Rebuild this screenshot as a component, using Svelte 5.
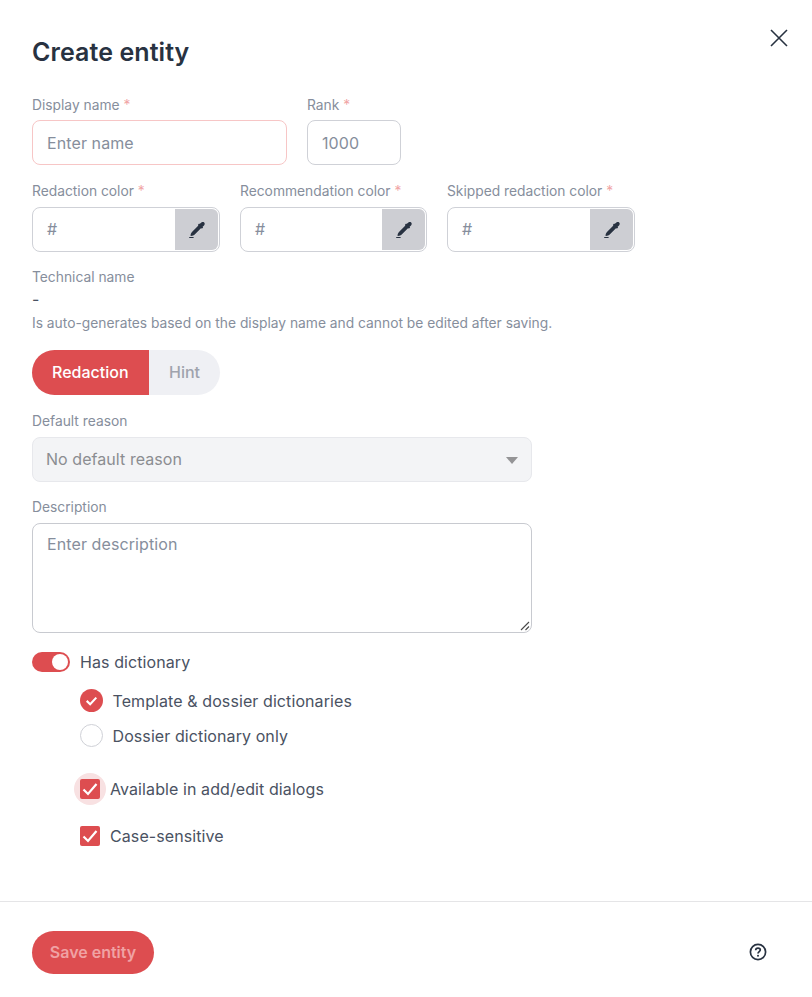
<script lang="ts">
	const colorFields = [
		{ label: 'Redaction color', width: 188 },
		{ label: 'Recommendation color', width: 187 },
		{ label: 'Skipped redaction color', width: 188 }
	];
</script>

<div class="dialog">
	<button class="close" aria-label="Close">
		<svg viewBox="0 0 18 18" width="18" height="18">
			<path d="M1 1 L17 17 M17 1 L1 17" />
		</svg>
	</button>

	<div class="body">
		<h1>Create entity</h1>

		<div class="row first">
			<div class="field">
				<span class="label">Display name <i>*</i></span>
				<div class="input name">Enter name</div>
			</div>
			<div class="field">
				<span class="label">Rank <i>*</i></span>
				<div class="input rank">1000</div>
			</div>
		</div>

		<div class="row colors">
			{#each colorFields as f}
				<div class="field">
					<span class="label">{f.label} <i>*</i></span>
					<div class="color" style="width: {f.width}px">
						<span class="hash">#</span>
						<span class="picker">
							<svg viewBox="0 0 18 18" width="18" height="18">
								<path class="dark" d="M12.2 2.6 C13 1.2 15 0.4 16.2 1.4 C17.4 2.6 16.4 4.4 15.2 5.2 L14.6 5.8 L15.1 6.4 L13.8 7.7 L13.2 7.1 L7 13.3 C5.8 14.5 4.2 15 2.6 14.9 C2.5 13.4 3 11.9 4.2 10.7 L10.4 4.5 L9.8 3.9 L11.1 2.6 L11.7 3.1 Z" />
								<path class="dark" d="M1.2 16 H5.6 V17 H1.2 Z" />
							</svg>
						</span>
					</div>
				</div>
			{/each}
		</div>

		<div class="technical">
			<span class="label">Technical name</span>
			<span class="dash">-</span>
			<span class="hint">Is auto-generates based on the display name and cannot be edited after saving.</span>
		</div>

		<div class="segmented">
			<span class="seg active">Redaction</span>
			<span class="seg">Hint</span>
		</div>

		<div class="field reason">
			<span class="label">Default reason</span>
			<div class="select">
				No default reason
				<span class="caret"></span>
			</div>
		</div>

		<div class="field description">
			<span class="label">Description</span>
			<div class="textarea">
				Enter description
				<svg class="grip" viewBox="0 0 10 10" width="10" height="10">
					<path d="M1 9 L9 1 M5.5 9 L9 5.5" />
				</svg>
			</div>
		</div>

		<div class="switch-row">
			<span class="switch"><span class="knob"></span></span>
			<span class="text">Has dictionary</span>
		</div>

		<div class="radios">
			<div class="radio-row">
				<span class="radio on">
					<svg viewBox="0 0 24 24" width="23" height="23"><path d="M7 12.4 L10.6 15.8 L17 9" /></svg>
				</span>
				<span class="text">Template &amp; dossier dictionaries</span>
			</div>
			<div class="radio-row">
				<span class="radio"></span>
				<span class="text">Dossier dictionary only</span>
			</div>
		</div>

		<div class="checks">
			<div class="check-row">
				<span class="check halo">
					<svg viewBox="0 0 20 20" width="20" height="20"><path d="M3.5 10.5 L8 15 L16.5 5" /></svg>
				</span>
				<span class="text">Available in add/edit dialogs</span>
			</div>
			<div class="check-row">
				<span class="check">
					<svg viewBox="0 0 20 20" width="20" height="20"><path d="M3.5 10.5 L8 15 L16.5 5" /></svg>
				</span>
				<span class="text">Case-sensitive</span>
			</div>
		</div>
	</div>

	<div class="footer">
		<span class="save"><span>Save entity</span></span>
		<svg class="help" viewBox="0 0 18 18" width="18" height="18">
			<circle cx="9" cy="9" r="7.6" />
			<path d="M6.7 7.2 C6.7 5.9 7.7 5.1 9 5.1 C10.3 5.1 11.3 5.9 11.3 7.1 C11.3 8.6 9 8.7 9 10.5" />
			<circle class="dot" cx="9" cy="12.8" r="1" />
		</svg>
	</div>
</div>

<style>
	:global(body) {
		background: #fff;
	}

	.dialog {
		position: relative;
		width: 812px;
		height: 997px;
		box-sizing: border-box;
		font-family: Inter, 'Noto Sans', sans-serif;
		color: #283241;
		background: #fff;
	}

	.close {
		position: absolute;
		top: 29px;
		right: 24px;
		width: 18px;
		height: 18px;
		padding: 0;
		border: 0;
		background: none;
	}

	.close svg {
		display: block;
	}

	.close path {
		fill: none;
		stroke: #283241;
		stroke-width: 1.6;
	}

	.body {
		padding: 37px 32px 0;
		height: 864px;
		box-sizing: border-box;
	}

	h1 {
		margin: 0;
		font-size: 25px;
		line-height: 30px;
		font-weight: 600;
		letter-spacing: 0.08px;
		color: #283241;
	}

	.row {
		display: flex;
		gap: 20px;
	}

	.first {
		margin-top: 29px;
	}

	.first .label {
		margin-bottom: 6px;
	}

	.colors {
		margin-top: 17px;
	}

	.field {
		display: flex;
		flex-direction: column;
	}

	.label {
		font-size: 13.8px;
		line-height: 18px;
		color: #868e9c;
		margin-bottom: 7px;
	}

	.label i {
		font-style: normal;
		color: #f1a5a5;
	}

	.input {
		height: 45px;
		box-sizing: border-box;
		border: 1px solid #cfd1d7;
		border-radius: 8px;
		padding: 0 14px;
		font-size: 16px;
		line-height: 44px;
		letter-spacing: 0.1px;
		color: #868e9c;
	}

	.name {
		width: 255px;
		border-color: #f7c6c6;
	}

	.rank {
		width: 94px;
	}

	.color {
		display: flex;
		justify-content: space-between;
		height: 45px;
		box-sizing: border-box;
		border: 1px solid #cfd1d7;
		border-radius: 8px;
		overflow: hidden;
		padding: 1px;
	}

	.hash {
		padding-left: 13px;
		font-size: 16px;
		line-height: 41px;
		color: #868e9c;
	}

	.picker {
		display: flex;
		align-items: center;
		justify-content: center;
		width: 43px;
		background: #cdced3;
		border-radius: 0 6px 6px 0;
	}

	.dark {
		fill: #283241;
	}

	.technical {
		display: flex;
		flex-direction: column;
		margin-top: 16px;
	}

	.technical .label {
		margin-bottom: 0;
	}

	.dash {
		margin-top: 3px;
		font-size: 16px;
		line-height: 20px;
		color: #4a5262;
	}

	.hint {
		margin-top: 5px;
		font-size: 13.8px;
		line-height: 18px;
		color: #868e9c;
	}

	.segmented {
		display: flex;
		width: 188px;
		height: 45px;
		margin-top: 18px;
		border-radius: 23px;
		overflow: hidden;
		background: #eff0f4;
		font-size: 16px;
		line-height: 45px;
		font-weight: 500;
		color: #9fa3ad;
	}

	.seg {
		padding: 0 20px;
	}

	.seg.active {
		width: 117px;
		box-sizing: border-box;
		background: #dd4d50;
		color: #fff;
	}

	.reason {
		margin-top: 17px;
	}

	.select {
		position: relative;
		width: 500px;
		height: 45px;
		box-sizing: border-box;
		border: 1px solid #e7e8ec;
		border-radius: 8px;
		background: #f3f4f6;
		padding: 0 13px;
		font-size: 16px;
		line-height: 43px;
		letter-spacing: 0.06px;
		color: #8b8d91;
	}

	.caret {
		position: absolute;
		right: 13px;
		top: 19px;
		width: 0;
		height: 0;
		border-left: 6.5px solid transparent;
		border-right: 6.5px solid transparent;
		border-top: 7px solid #949496;
	}

	.description {
		margin-top: 16px;
	}

	.textarea {
		position: relative;
		width: 500px;
		height: 110px;
		box-sizing: border-box;
		border: 1px solid #c8cad0;
		border-radius: 8px;
		padding: 10px 14px;
		font-size: 16px;
		line-height: 20px;
		letter-spacing: 0.1px;
		color: #868e9c;
	}

	.grip {
		position: absolute;
		right: 1px;
		bottom: 1px;
	}

	.grip path {
		fill: none;
		stroke: #4a4a4a;
		stroke-width: 1.1;
	}

	.text {
		font-size: 16px;
		line-height: 20px;
		letter-spacing: 0.09px;
		color: #4a5262;
	}

	.switch-row {
		display: flex;
		align-items: center;
		gap: 10px;
		margin-top: 19px;
		height: 20px;
	}

	.switch {
		display: flex;
		justify-content: flex-end;
		align-items: center;
		width: 38px;
		height: 20px;
		box-sizing: border-box;
		padding-right: 2px;
		border-radius: 10px;
		background: #dd4d50;
	}

	.knob {
		width: 16px;
		height: 16px;
		border-radius: 50%;
		background: #fff;
	}

	.radios {
		display: flex;
		flex-direction: column;
		gap: 12px;
		margin: 17px 0 0 48px;
	}

	.radio-row {
		display: flex;
		align-items: center;
		gap: 9.5px;
		height: 23px;
	}

	.radio {
		width: 23px;
		height: 23px;
		box-sizing: border-box;
		border: 1px solid #cfd1d7;
		border-radius: 50%;
		overflow: hidden;
	}

	.radio.on {
		border: 0;
		background: #dd4d50;
	}

	.radio svg {
		display: block;
	}

	.radio path,
	.check path {
		fill: none;
		stroke: #fff;
		stroke-width: 2.2;
	}

	.checks {
		display: flex;
		flex-direction: column;
		gap: 27px;
		margin: 32px 0 0 48px;
	}

	.check-row {
		display: flex;
		align-items: center;
		gap: 10px;
		height: 20px;
	}

	.check {
		position: relative;
		width: 20px;
		height: 20px;
		border-radius: 2px;
		background: #dd4d50;
	}

	.check svg {
		position: relative;
		display: block;
	}

	.halo::before {
		content: '';
		position: absolute;
		left: -6px;
		top: -6px;
		width: 32px;
		height: 32px;
		border-radius: 50%;
		background: #f8e1e2;
	}

	.halo::after {
		content: '';
		position: absolute;
		inset: 0;
		border-radius: 2px;
		background: #dd4d50;
	}

	.halo svg {
		z-index: 1;
	}

	.footer {
		display: flex;
		align-items: center;
		justify-content: space-between;
		height: 96px;
		box-sizing: border-box;
		margin-top: 37px;
		padding: 0 45px 0 32px;
		border-top: 1px solid #e5e5e7;
	}

	.save {
		width: 122px;
		height: 43px;
		margin-top: 5px;
		border-radius: 22px;
		background: #dd4d50;
		text-align: center;
		font-size: 16px;
		line-height: 43px;
		font-weight: 600;
	}

	.save span {
		color: #f0a2a4;
	}

	.help {
		margin-top: 5px;
	}

	.help circle,
	.help path {
		fill: none;
		stroke: #283241;
		stroke-width: 1.7;
	}

	.help .dot {
		fill: #283241;
		stroke: none;
	}
</style>
